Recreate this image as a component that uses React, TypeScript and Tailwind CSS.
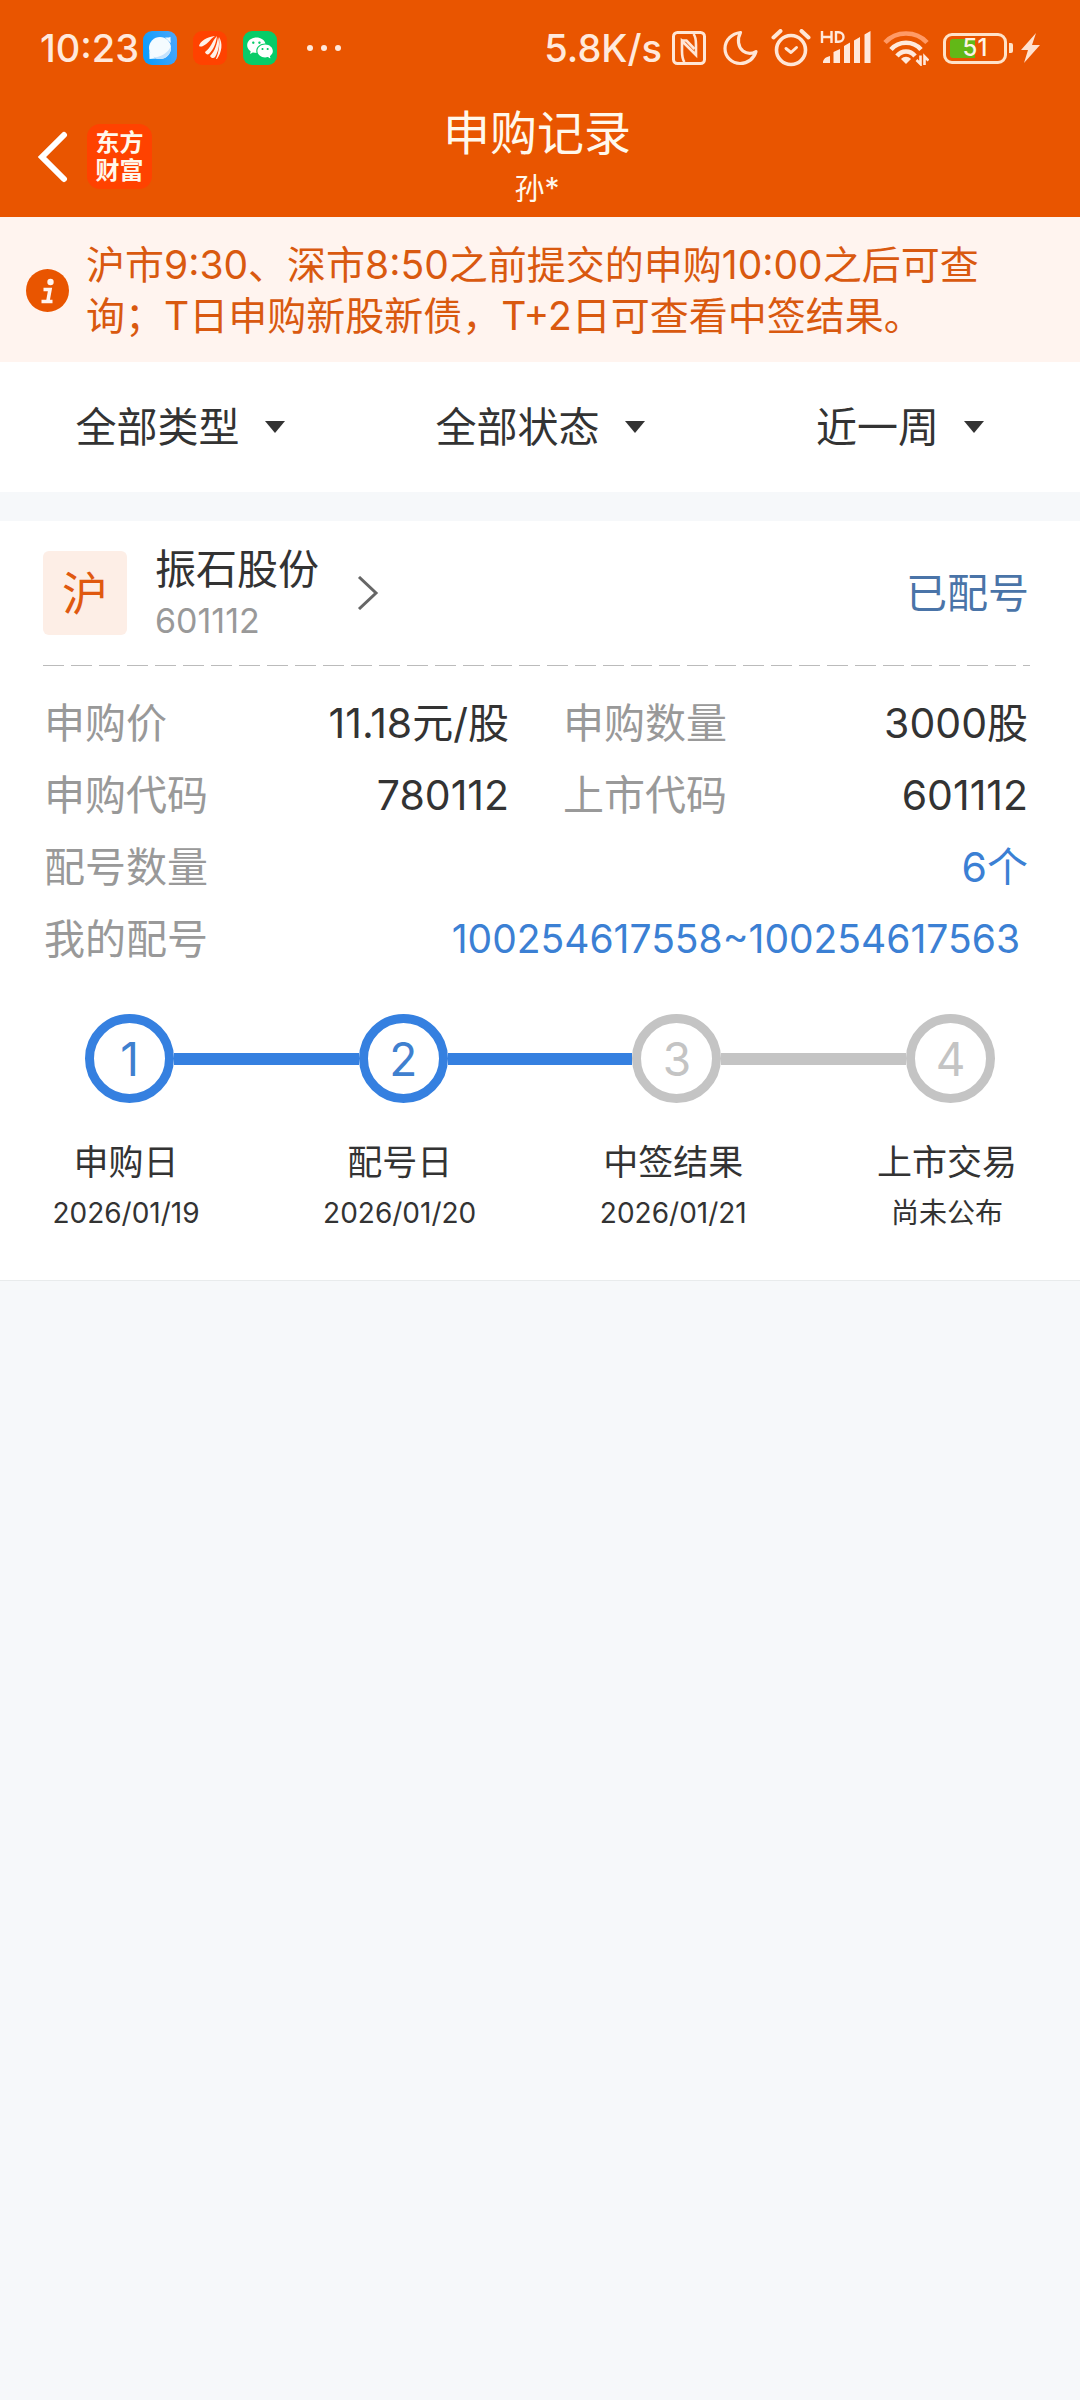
import { RiWechatFill } from "react-icons/ri"

const filters = [
    { label: "类型", options: ["全部类型", "新股", "新债"] },
    { label: "状态", options: ["全部状态", "已配号", "已中签"] },
    { label: "时间", options: ["近一周", "近一月", "近一年"] },
]

const steps = [
    { name: "申购日", date: "2026/01/19", done: true },
    { name: "配号日", date: "2026/01/20", done: true },
    { name: "中签结果", date: "2026/01/21", done: false },
    { name: "上市交易", date: "尚未公布", done: false },
]

const BrowserIcon = () => (
    <svg className="size-[34px]" viewBox="0 0 34 34">
        <defs>
            <linearGradient id="sky" x1="0" y1="0.5" x2="1" y2="0.2">
                <stop offset="0" stopColor="#0c9dfb" />
                <stop offset="1" stopColor="#4aa6fb" />
            </linearGradient>
        </defs>
        <rect width="34" height="34" rx="9" fill="url(#sky)" />
        <circle cx="17" cy="17" r="11" fill="#f4fbff" />
        <path d="M22 6.500c2 .2 4 0 5.500-.5 0 2 0 4 .3 6zM6.200 20c.2 3 .3 5 .3 8 2 0 4-.3 6-.5z" fill="#f4fbff" />
        <path d="M28 15c.5 7-4.500 13-11 13-3 0-5-.3-6.500-1.500C18 26 25 22 28 15z" fill="#c3e2fd" />
    </svg>
)

const StockIcon = () => (
    <svg className="size-[34px]" viewBox="0 0 34 34">
        <rect width="34" height="34" rx="9" fill="#ff4200" />
        <g fill="#fff1e8">
            <path d="M6 15C7 10 14 6 22 5c-5 3-7 8-12 10-1.500.800-3 .800-4 0z" />
            <path d="M12 21c6-4 7-11 12-16-1 7-3 13-8 18-1.500 1-3.500 0-4-2z" />
            <path d="M17 25c5-5 7-12 8-19 2 6 1 13-3 20-1.500 2-4 1-5-1z" />
            <path d="M23 28c3-7 4-15 3-22 4 6 3 15-2 22z" />
        </g>
    </svg>
)

const NfcIcon = () => (
    <svg className="ml-[10px] size-[34px]" viewBox="0 0 34 34" fill="none" stroke="#ffe6d6">
        <rect x="1.500" y="1.500" width="31" height="31" rx="4" strokeWidth="3" />
        <path d="M12.500 31c-2.500-3-2.500-7-2.500-11V10l14 14V14c0-4 0-8-2.500-11" strokeWidth="2.600" />
        <path d="M10 9.500h4.500l8 8.500" strokeWidth="2.600" />
    </svg>
)

const MoonIcon = () => (
    <svg className="ml-[16px] h-[36px] w-[36px]" viewBox="0 0 36 36" fill="none" stroke="#ffe6d6" strokeWidth="3.200" strokeLinejoin="round">
        <path d="M18.500 2.500C10 3.500 3 10 3 18.500 3 27 10 33.500 18 33.500c8 0 14-5 16-12-4 2.500-9 2.500-13-.5-5-4-6-12-2.500-18.500z" />
    </svg>
)

const AlarmIcon = () => (
    <svg className="ml-[13px] h-[38px] w-[40px]" viewBox="0 0 40 38" fill="none" stroke="#ffe6d6" strokeLinecap="round">
        <circle cx="20" cy="21" r="14.500" strokeWidth="3.600" />
        <path d="M2.500 8.500l7-6.500M37.500 8.500l-7-6.500" strokeWidth="4" />
        <path d="M15 19.500l5 4 5.500-5" strokeWidth="3" strokeLinejoin="round" />
    </svg>
)

const SignalIcon = () => (
    <svg className="ml-[9px] h-[34px] w-[52px]" viewBox="0 0 52 34" fill="#ffe9dc">
        <path d="M3 31.500c0-3.500 3-5.500 7-6.500v7H3zM13.500 21l6.500-3v14h-6.500zM24 15l6-3.500V32h-6zM34 9.500l6-3.500V32h-6zM44.500 3.500L50.500 0v32h-6z" />
        <g stroke="#ffe9dc" strokeWidth="2.400" fill="none">
            <path d="M2 0v12M11.500 0v12M2 6h9.500" />
            <path d="M16 1.200h2.500c3 0 5 2 5 4.800s-2 4.800-5 4.800H16z" />
        </g>
    </svg>
)

const WifiIcon = () => (
    <svg className="ml-[11px] h-[36px] w-[46px]" viewBox="0 0 46 36" fill="none" strokeWidth="4.600">
        <path d="M2 12.500C13 .5 33 .5 44 12.500" stroke="#ff9a66" />
        <path d="M8 19.500c8-9 22-9 30 0" stroke="#ffe9dc" />
        <path d="M14 26c5-6 13-6 18 0" stroke="#ffe9dc" />
        <path d="M18 29c3-3 7-3 10 0l-5 5z" fill="#ffe9dc" stroke="none" />
        <path d="M37.500 25.500v8.500l-4-4M41.500 35v-8.500l4 4" stroke="#ffe9dc" strokeWidth="2.600" />
    </svg>
)

const Battery = () => (
    <div className="ml-[14px] flex items-center">
        <div className="relative flex h-[31px] w-[64px] items-center justify-center rounded-[9px] border-3 border-[#ffe2c8]">
            <div className="absolute top-[3px] bottom-[3px] left-[4px] w-[25px] rounded-l-[3px] bg-[#62b817]" />
            <span className="relative text-[24px] leading-[24px] font-medium text-[#fff3e6]">51</span>
        </div>
        <div className="ml-[2px] h-[10px] w-[4px] rounded-r-[2px] bg-[#ffe2c8]" />
        <svg className="ml-[8px] h-[30px] w-[19px]" viewBox="0 0 19 30" fill="#ffe2d0">
            <path d="M15 0L0 17h7L3 30l16-18h-8z" />
        </svg>
    </div>
)

const StatusBar = () => (
    <div className="flex h-[96px] items-center justify-between px-[40px] text-[38px] leading-[48px] font-medium text-[#ffe9dc]">
        <div className="flex items-center">
            <span>10:23</span>
            <div className="ml-[4px] flex items-center gap-[16px]">
                <BrowserIcon />
                <StockIcon />
                <span className="flex size-[34px] items-center justify-center rounded-[9px] bg-[#07cc68]">
                    <RiWechatFill className="size-[28px] text-white" />
                </span>
            </div>
            <div className="ml-[30px] flex gap-[8px]">
                <i className="size-[6px] rounded-full bg-[#ffe9dc]" />
                <i className="size-[6px] rounded-full bg-[#ffe9dc]" />
                <i className="size-[6px] rounded-full bg-[#ffe9dc]" />
            </div>
        </div>
        <div className="flex items-center">
            <span>5.8K/s</span>
            <NfcIcon />
            <MoonIcon />
            <AlarmIcon />
            <SignalIcon />
            <WifiIcon />
            <Battery />
        </div>
    </div>
)

const Header = () => (
    <header className="bg-[#e95500] text-[#fff8ec]">
        <StatusBar />
        <div className="grid h-[121px] grid-cols-[1fr_auto_1fr] items-center">
            <div className="flex items-center pl-[36px]">
                <button type="button" aria-label="返回">
                    <svg className="h-[52px] w-[32px]" viewBox="0 0 32 52" fill="none" stroke="#fff" strokeWidth="6" strokeLinecap="round">
                        <path d="M28 4L6 26l22 22" />
                    </svg>
                </button>
                <div className="ml-[19px] grid size-[65px] place-content-center rounded-[13px] bg-[#ff4200] text-center text-[24px] leading-[28px] font-bold">
                    <span>东方</span>
                    <span>财富</span>
                </div>
            </div>
            <div className="pr-[6px] text-center">
                <h1 className="text-[47px] leading-[62px]">申购记录</h1>
                <p className="text-[30px] leading-[48px]">孙*</p>
            </div>
        </div>
    </header>
)

const Notice = () => (
    <div className="flex items-center bg-[#fff4ef] pt-[22px] pr-[64px] pb-[21px] pl-[26px] text-[39px] leading-[51px] text-[#d9590f]">
        <svg className="mr-[17px] size-[43px] shrink-0" viewBox="0 0 43 43">
            <circle cx="21.500" cy="21.500" r="21.500" fill="#e95500" />
            <circle cx="24.500" cy="13" r="3.200" fill="#fff4ef" />
            <path d="M17.500 20.500h6.500l-2.200 12M15.500 32.500h11" fill="none" stroke="#fff4ef" strokeWidth="3.600" />
        </svg>
        <p>沪市9:30、深市8:50之前提交的申购10:00之后可查询；T日申购新股新债，T+2日可查看中签结果。</p>
    </div>
)

const Filters = () => (
    <div className="grid h-[130px] grid-cols-3 items-center bg-white">
        {filters.map((filter) => (
            <label key={filter.label} className="flex items-center justify-center gap-[25px]">
                <select aria-label={filter.label} className="field-sizing-content appearance-none bg-transparent text-[41px] leading-[60px] text-[#333]">
                    {filter.options.map((option) => (
                        <option key={option}>{option}</option>
                    ))}
                </select>
                <svg className="h-[12px] w-[20px]" viewBox="0 0 20 12" fill="#333">
                    <path d="M0 0h20L10 12z" />
                </svg>
            </label>
        ))}
    </div>
)

const Field = ({ label, value }: { label: string; value: string }) => (
    <div className="flex justify-between">
        <dt className="text-[#999]">{label}</dt>
        <dd>{value}</dd>
    </div>
)

const Steps = () => (
    <div className="pt-[39px]">
        <div className="flex items-center px-[85px]">
            {steps.map((step, i) => (
                <div key={step.name} className={i === 0 ? "flex items-center" : "flex flex-1 items-center"}>
                    {i > 0 && <div className={`h-[12px] flex-1 ${steps[i - 1].done ? "bg-[#3580e0]" : "bg-[#c4c4c4]"}`} />}
                    <div
                        className={`flex size-[89px] items-center justify-center rounded-full border-[9px] text-[46px] leading-[60px] ${
                            step.done ? "border-[#3580e0] text-[#3f80cf]" : "border-[#c4c4c4] text-[#c4c4c4]"
                        }`}
                    >
                        {i + 1}
                    </div>
                </div>
            ))}
        </div>
        <ol className="mt-[34px] flex justify-between pr-[38px] pl-[31px]">
            {steps.map((step) => (
                <li key={step.name} className="w-[190px] text-center">
                    <p className="text-[35px] leading-[51px]">{step.name}</p>
                    <p className="text-[28px] leading-[51px]">{step.date}</p>
                </li>
            ))}
        </ol>
    </div>
)

const RecordCard = () => (
    <section className="mt-[29px] border-b border-[#e8ebec] bg-white pt-[20px] pb-[41px] text-[#333]">
        <div className="flex items-center px-[43px]">
            <span className="flex size-[84px] items-center justify-center rounded-[6px] bg-[#fdeee6] text-[46px] leading-[60px] text-[#e0590f]">沪</span>
            <a href="#detail" className="ml-[28px] flex items-center">
                <span>
                    <span className="block text-[41px] leading-[56px]">振石股份</span>
                    <span className="block text-[34px] leading-[48px] text-[#999]">601112</span>
                </span>
                <svg className="ml-[38px] h-[34px] w-[22px]" viewBox="0 0 22 34" fill="none" stroke="#666" strokeWidth="3">
                    <path d="M2 1l17 16L2 33" />
                </svg>
            </a>
            <span className="ml-auto pr-[8px] text-[41px] leading-[60px] text-[#4a74a8]">已配号</span>
        </div>
        <div className="pt-[20px] pr-[50px] pl-[43px]">
            <div className="h-px bg-[repeating-linear-gradient(to_right,#bbb_0_21px,transparent_21px_28px)]" />
        </div>
        <dl className="grid grid-cols-2 gap-x-[54px] pt-[21px] pr-[52px] pl-[44px] text-[41px] leading-[72px]">
            <Field label="申购价" value="11.18元/股" />
            <Field label="申购数量" value="3000股" />
            <Field label="申购代码" value="780112" />
            <Field label="上市代码" value="601112" />
            <div className="col-span-2 flex justify-between">
                <dt className="text-[#999]">配号数量</dt>
                <dd className="text-[#3b80d4]">6个</dd>
            </div>
            <div className="col-span-2 flex justify-between">
                <dt className="text-[#999]">我的配号</dt>
                <dd className="pr-[8px] text-[39px]">
                    <a href="#numbers" className="text-[#3b80d4]">100254617558~100254617563</a>
                </dd>
            </div>
        </dl>
        <Steps />
    </section>
)

const App = () => {
    return (
        <main className="min-h-screen bg-[#f6f8fa] font-['Inter','Noto_Sans_CJK_SC',sans-serif]">
            <Header />
            <Notice />
            <Filters />
            <RecordCard />
        </main>
    )
}

export default App
